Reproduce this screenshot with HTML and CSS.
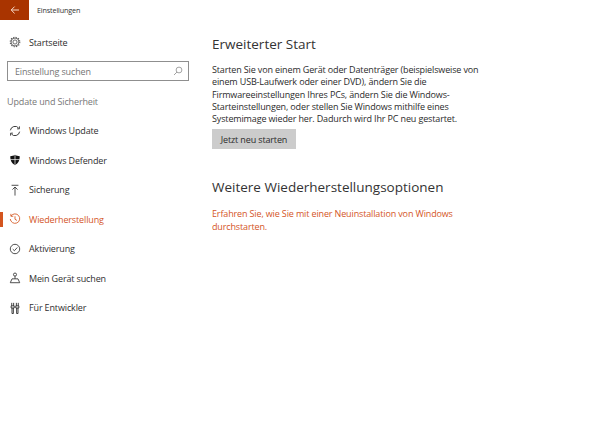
FILE: index.html
```html
<!DOCTYPE html>
<html lang="de">
<head>
<meta charset="utf-8">
<title>Einstellungen</title>
<link rel="stylesheet" href="styles.css">
</head>
<body>
<header class="titlebar">
  <button class="back" aria-label="Zurück">
    <svg width="10" height="10" viewBox="0 0 10 10"><path d="M9 5H1.2M4.6 1.6 1.2 5l3.4 3.4" fill="none" stroke="#f6d9c8" stroke-width="1"/></svg>
  </button>
  <span class="title">Einstellungen</span>
</header>
<div class="layout">
  <aside class="sidebar">
    <div class="home">
      <svg class="icon" viewBox="0 0 14 14"><circle cx="7" cy="7" r="2.4" fill="none" stroke="#555" stroke-width="1"/><circle cx="7" cy="7" r="4.6" fill="none" stroke="#555" stroke-width="1"/><circle cx="7" cy="7" r="5.6" fill="none" stroke="#555" stroke-width="1.2" stroke-dasharray="1.5 1.43"/></svg>
      <span>Startseite</span>
    </div>
    <div class="search">
      <span>Einstellung suchen</span>
      <svg width="10" height="10" viewBox="0 0 10 10"><circle cx="6" cy="4" r="2.9" fill="none" stroke="#999" stroke-width=".9"/><path d="M4 6 1 9" stroke="#999" stroke-width=".9"/></svg>
    </div>
    <div class="group">Update und Sicherheit</div>
    <nav class="nav">
      <a class="item">
        <svg class="icon" viewBox="0 0 14 14"><path d="M1.6 6.2A5.5 5.5 0 0 1 11.3 3.6M12.4 7.800A5.5 5.5 0 0 1 2.7 10.4" fill="none" stroke="#333" stroke-width="1.1"/><path d="M12.2 1.6v2.900H9.4M1.800 12.400V9.500h2.800" fill="none" stroke="#333" stroke-width="1"/></svg>
        <span>Windows Update</span>
      </a>
      <a class="item">
        <svg class="icon" viewBox="0 0 14 14"><path d="M7 1c1.600 1.200 3.400 1.700 5.500 1.700 0 4.600-1.400 8.300-5.500 10.300C2.900 11 1.500 7.300 1.500 2.700 3.600 2.700 5.400 2.200 7 1Z" fill="#111"/><path d="M7 1v13M1.500 6.500h11" stroke="#fff" stroke-width=".8"/></svg>
        <span>Windows Defender</span>
      </a>
      <a class="item">
        <svg class="icon" viewBox="0 0 14 14"><path d="M3 1.500h8M7 13.500V3.500M4 6.500l3-3 3 3" fill="none" stroke="#333" stroke-width="1"/></svg>
        <span>Sicherung</span>
      </a>
      <a class="item active">
        <svg class="icon" viewBox="0 0 14 14"><path d="M2.400 3.500A5.500 5.500 0 1 1 1.500 7M2.200 1v2.800H5M7 3.800V7.300l2.300 1.400" fill="none" stroke="#d4551f" stroke-width="1"/></svg>
        <span>Wiederherstellung</span>
      </a>
      <a class="item">
        <svg class="icon" viewBox="0 0 14 14"><circle cx="7" cy="7" r="5.500" fill="none" stroke="#333" stroke-width="1"/><path d="M4.400 7.200 6.300 9l3.400-3.800" fill="none" stroke="#333" stroke-width="1"/></svg>
        <span>Aktivierung</span>
      </a>
      <a class="item">
        <svg class="icon" viewBox="0 0 14 14"><circle cx="7" cy="3" r="1.800" fill="none" stroke="#333" stroke-width="1"/><path d="M7 4.800V8M1.500 12.500 3.500 8h7l2 4.500Z" fill="none" stroke="#333" stroke-width="1"/></svg>
        <span>Mein Gerät suchen</span>
      </a>
      <a class="item">
        <svg class="icon" viewBox="0 0 14 14"><path d="M3.200 1v3.500M5.400 1v3.500M8.600 1v3.500M10.800 1v3.500M2.500 4.500h3.600v2.500H2.500ZM7.900 4.500h3.600v2.500H7.900ZM3.500 7v6.500h1.600V7M8.900 7v6.500h1.600V7" fill="none" stroke="#222" stroke-width="1"/></svg>
        <span>Für Entwickler</span>
      </a>
    </nav>
  </aside>
  <main class="content">
    <h1>Erweiterter Start</h1>
    <p>Starten Sie von einem Gerät oder Datenträger (beispielsweise von einem USB-Laufwerk oder einer DVD), ändern Sie die Firmwareeinstellungen Ihres PCs, ändern Sie die Windows-Starteinstellungen, oder stellen Sie Windows mithilfe eines Systemimage wieder her. Dadurch wird Ihr PC neu gestartet.</p>
    <button class="restart">Jetzt neu starten</button>
    <h2>Weitere Wiederherstellungsoptionen</h2>
    <a class="link">Erfahren Sie, wie Sie mit einer Neuinstallation von Windows durchstarten.</a>
  </main>
</div>
</body>
</html>
```
FILE: styles.css
```css
* { box-sizing: border-box; }
html, body { margin: 0; height: 100%; }
body { background: #fff; color: #2b2b2b; font-family: "Open Sans", "Liberation Sans", sans-serif; font-size: 9px; letter-spacing: -.14px; overflow: hidden; }
.titlebar { display: flex; align-items: center; height: 20px; }
.back { width: 29px; height: 20px; padding: 0; border: 0; background: #a93400; display: flex; align-items: center; justify-content: center; }
.title { margin-left: 8px; font-size: 7.200px; color: #333; }
.layout { display: flex; }
.sidebar { width: 197px; flex: none; }
.home { display: flex; align-items: center; gap: 8px; height: 20px; margin-top: 12px; padding-left: 9px; }
.icon { width: 12px; height: 12px; flex: none; }
.search { display: flex; align-items: center; justify-content: space-between; margin: 9px 0 0 7px; width: 182px; height: 20px; padding: 0 5px 0 7px; border: 1.500px solid #8f8f8f; color: #757575; }
.group { margin: 15px 0 0 7px; color: #777; line-height: 12px; }
.nav { display: flex; flex-direction: column; margin-top: 8px; }
.item { display: flex; align-items: center; gap: 8px; height: 29.500px; padding-left: 9px; color: #2f2f2f; position: relative; }
.item.active { color: #d4551f; }
.item.active::before { content: ""; position: absolute; left: 0; top: 7px; width: 3px; height: 15px; background: #d4551f; }
.content { padding: 14px 0 0 15px; width: 285px; }
h1, h2 { margin: 0; font-weight: 400; font-size: 13.500px; letter-spacing: 0; line-height: 20px; color: #333; }
p { margin: 10px 0 0; line-height: 12.300px; color: #2b2b2b; }
.restart { display: block; margin-top: 4px; width: 84px; height: 20px; padding: 0; border: 0; background: #cccccc; font: inherit; letter-spacing: inherit; color: #2b2b2b; }
h2 { margin-top: 28px; }
.link { display: block; margin-top: 11px; line-height: 12.600px; color: #d4551f; }
```
